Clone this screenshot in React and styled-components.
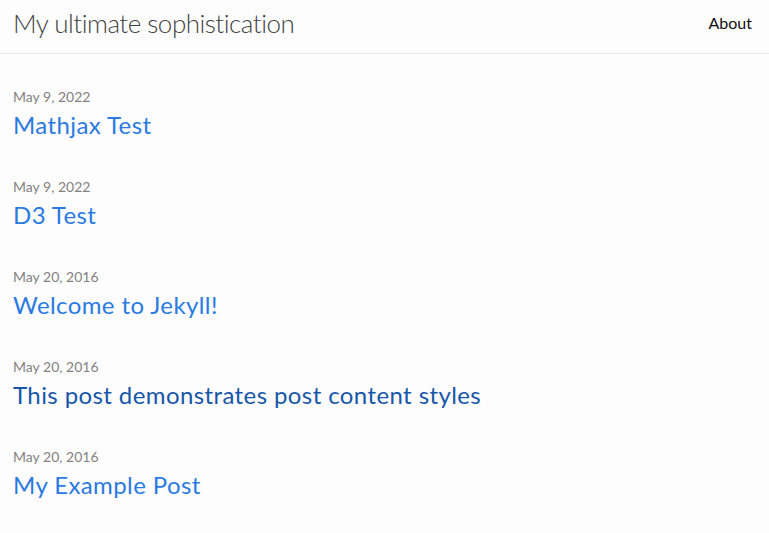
import React from "react";
import styled, { createGlobalStyle } from "styled-components";

const GlobalStyle = createGlobalStyle`
	body {
		margin: 0;
		background: #fdfdfd;
		font-family: Lato, "Liberation Sans", sans-serif;
		font-size: 16px;
		line-height: 1.5;
		color: #111111;
	}
`;

const Header = styled.header`
	display: flex;
	justify-content: space-between;
	align-items: center;
	height: 46px;
	padding: 0 17px 7px 13px;
	border-bottom: 1px solid #e8e8e8;
`;

const SiteTitle = styled.a`
	font-size: 26px;
	font-weight: 300;
	letter-spacing: -0.5px;
	color: #424242;
	text-decoration: none;
`;

const NavLink = styled.a`
	font-size: 16px;
	color: #111111;
	text-decoration: none;
`;

const PostList = styled.ul`
	list-style: none;
	margin: 0;
	padding: 32px 13px;
	display: flex;
	flex-direction: column;
	gap: 33px;
`;

const PostItem = styled.li`
	display: flex;
	flex-direction: column;
`;

const PostMeta = styled.span`
	font-size: 14px;
	line-height: 21px;
	color: #828282;
`;

const PostLink = styled.a`
	font-size: 24px;
	line-height: 36px;
	letter-spacing: 0.4px;
	color: ${(p) => (p.visited ? "#1756a9" : "#2a7ae2")};
	text-decoration: none;
`;

const posts = [
	{ date: "May 9, 2022", title: "Mathjax Test" },
	{ date: "May 9, 2022", title: "D3 Test" },
	{ date: "May 20, 2016", title: "Welcome to Jekyll!" },
	{ date: "May 20, 2016", title: "This post demonstrates post content styles", visited: true },
	{ date: "May 20, 2016", title: "My Example Post" },
];

export default function App() {
	return (
		<>
			<GlobalStyle />
			<Header>
				<SiteTitle href="#">My ultimate sophistication</SiteTitle>
				<NavLink href="#">About</NavLink>
			</Header>
			<PostList>
				{posts.map((post, i) => (
					<PostItem key={i}>
						<PostMeta>{post.date}</PostMeta>
						<PostLink href="#" visited={post.visited ? 1 : 0}>
							{post.title}
						</PostLink>
					</PostItem>
				))}
			</PostList>
		</>
	);
}
